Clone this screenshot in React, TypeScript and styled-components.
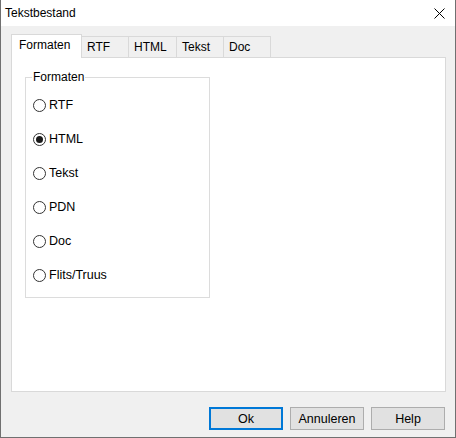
import React, { useState } from "react";
import styled, { createGlobalStyle } from "styled-components";

const GlobalStyle = createGlobalStyle`
  html, body { margin: 0; padding: 0; background: #ffffff; }
  body { font-family: "Liberation Sans", Arial, sans-serif; font-size: 12px; color: #000; }
`;

const Window = styled.div`
  width: 456px;
  height: 438px;
  box-sizing: border-box;
  border: 1px solid #707070;
  border-top: none;
  display: flex;
  flex-direction: column;
  background: #f0f0f0;
`;

const TitleBar = styled.div`
  height: 26px;
  flex: none;
  background: #ffffff;
  display: flex;
  align-items: center;
  justify-content: space-between;
  padding: 0 0 0 4px;
`;

const Title = styled.span`
  font-size: 12px;
  padding-bottom: 1px;
`;

const CloseButton = styled.div`
  width: 46px;
  height: 26px;
  display: flex;
  align-items: center;
  justify-content: center;
  margin-right: -7px;
`;

const Client = styled.div`
  flex: 1;
  display: flex;
  flex-direction: column;
  padding: 8px 9px 7px 10px;
`;

const TabRow = styled.div`
  display: flex;
  align-items: flex-end;
  height: 23px;
  position: relative;
  z-index: 1;
`;

const Tab = styled.div<{ $active?: boolean; $w: number }>`
  box-sizing: border-box;
  width: ${(p) => p.$w}px;
  height: ${(p) => (p.$active ? 24 : 21)}px;
  margin-bottom: ${(p) => (p.$active ? -1 : 0)}px;
  margin-left: ${(p) => (p.$active ? 0 : -1)}px;
  border: 1px solid #d9d9d9;
  border-bottom: none;
  background: ${(p) => (p.$active ? "#ffffff" : "#f0f0f0")};
  padding: ${(p) => (p.$active ? "3px 0 0 7px" : "3px 0 0 5px")};
  line-height: 15px;
  font-size: 12px;
  &:first-child { margin-left: 0; }
`;

const Panel = styled.div`
  box-sizing: border-box;
  height: 335px;
  flex: none;
  background: #ffffff;
  border: 1px solid #d9d9d9;
  padding: 12px 0 0 13px;
`;

const GroupBox = styled.fieldset`
  box-sizing: border-box;
  width: 185px;
  height: 228px;
  margin: 0;
  padding: 3px 0 0 7px;
  border: 1px solid #dcdcdc;
  min-width: 0;
`;

const Legend = styled.legend`
  padding: 0 1px;
  margin-left: -1px;
  line-height: 15px;
  font-size: 12px;
`;

const RadioRow = styled.label`
  display: flex;
  align-items: center;
  height: 34px;
  gap: 3px;
  font-size: 12.5px;
  cursor: default;
`;

const RadioCircle = styled.span<{ $checked: boolean }>`
  box-sizing: border-box;
  width: 13px;
  height: 13px;
  border-radius: 50%;
  border: 1px solid #333333;
  background: #ffffff;
  display: flex;
  align-items: center;
  justify-content: center;
  &::after {
    content: "";
    width: 7px;
    height: 7px;
    border-radius: 50%;
    background: #1a1a1a;
    display: ${(p) => (p.$checked ? "block" : "none")};
  }
`;

const ButtonBar = styled.div`
  display: flex;
  justify-content: flex-end;
  gap: 7px;
  margin-top: 15px;
  padding-right: 1px;
`;

const Button = styled.button<{ $default?: boolean }>`
  box-sizing: border-box;
  width: 74px;
  height: 23px;
  padding: 0;
  font-family: inherit;
  font-size: 12.5px;
  color: #000;
  background: #e1e1e1;
  border: ${(p) => (p.$default ? "2px solid #0078d7" : "1px solid #adadad")};
`;

const tabs = [
  { label: "Formaten", w: 71 },
  { label: "RTF", w: 48 },
  { label: "HTML", w: 49 },
  { label: "Tekst", w: 48 },
  { label: "Doc", w: 48 },
];

const formats = ["RTF", "HTML", "Tekst", "PDN", "Doc", "Flits/Truus"];

export default function App() {
  const [selected, setSelected] = useState("HTML");
  return (
    <>
      <GlobalStyle />
      <Window>
        <TitleBar>
          <Title>Tekstbestand</Title>
          <CloseButton>
            <svg width="11" height="11" viewBox="0 0 11 11">
              <path d="M0.5 0.5 L10.5 10.5 M10.5 0.5 L0.5 10.5" stroke="#000" strokeWidth="1" />
            </svg>
          </CloseButton>
        </TitleBar>
        <Client>
          <TabRow>
            {tabs.map((t, i) => (
              <Tab key={t.label} $active={i === 0} $w={t.w}>
                {t.label}
              </Tab>
            ))}
          </TabRow>
          <Panel>
            <GroupBox>
              <Legend>Formaten</Legend>
              {formats.map((f) => (
                <RadioRow key={f} onClick={() => setSelected(f)}>
                  <RadioCircle $checked={selected === f} />
                  {f}
                </RadioRow>
              ))}
            </GroupBox>
          </Panel>
          <ButtonBar>
            <Button $default>Ok</Button>
            <Button>Annuleren</Button>
            <Button>Help</Button>
          </ButtonBar>
        </Client>
      </Window>
    </>
  );
}
